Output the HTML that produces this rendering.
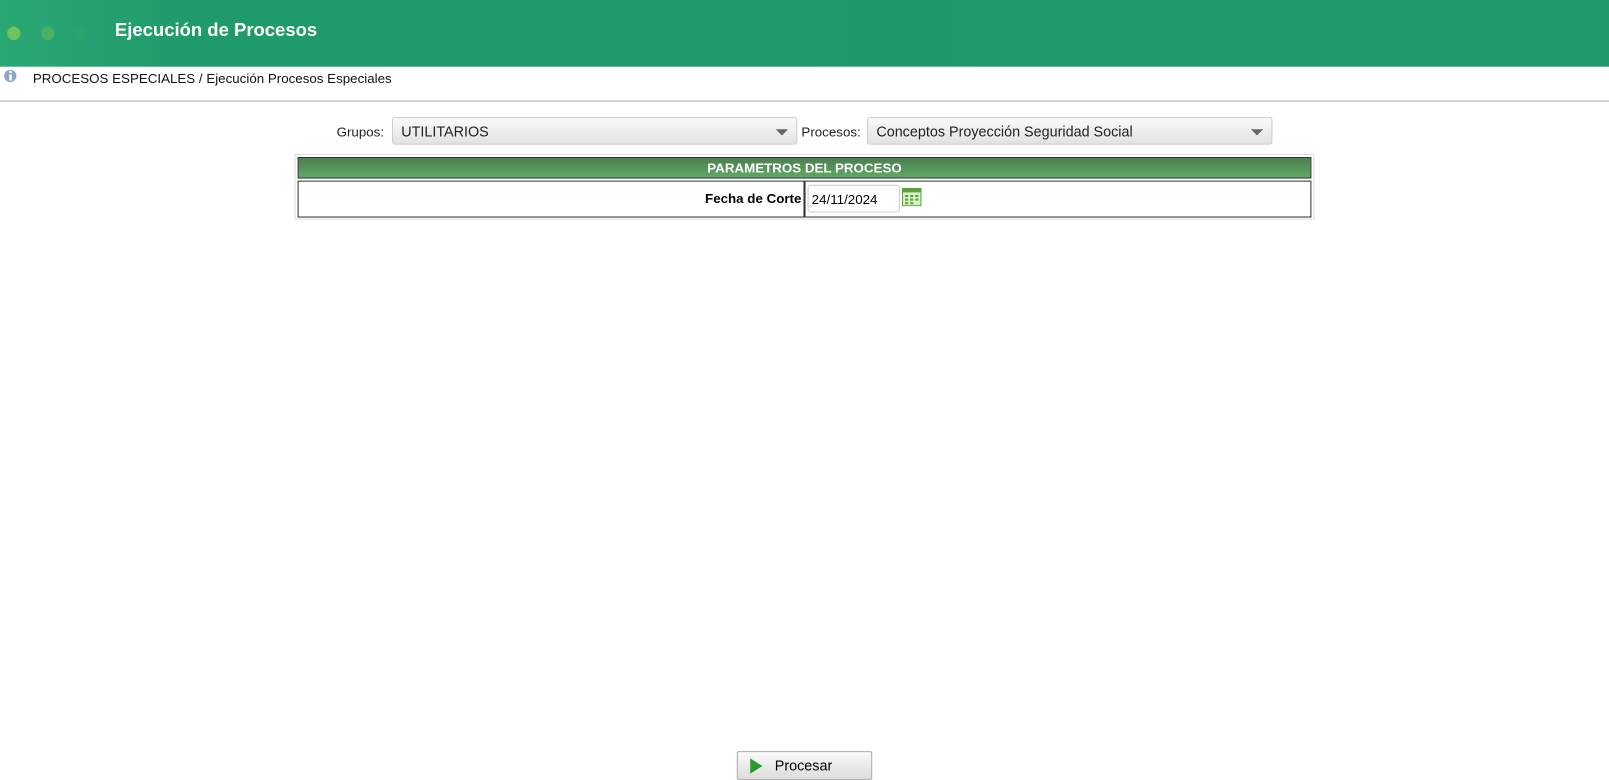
<!DOCTYPE html>
<html><head><meta charset="utf-8"><style>
html,body{margin:0;width:1609px;height:780px;overflow:hidden;background:#fff}
#w{position:absolute;left:0;top:0;width:1568px;height:760px;transform:scale(1.02615);transform-origin:0 0;font-family:"Liberation Sans",sans-serif}
.hdr{position:absolute;left:0;top:0;width:1568px;height:65px;background:linear-gradient(90deg,#2aa874 0%,#1f9a6a 12%,#1e9a6b 100%)}
.dot{position:absolute;top:26px;width:13px;height:13px;border-radius:50%}
.title{position:absolute;left:112px;top:19px;color:#fff;font-weight:bold;font-size:18px}
.bc{position:absolute;left:32px;top:69px;font-size:13px;color:#111}
.line{position:absolute;left:0;top:98px;width:1568px;height:1px;background:#aaa}
.lbl{position:absolute;font-size:13px;color:#222;top:121px}
.sel{position:absolute;top:114px;height:27px;border:1px solid #ccc;border-radius:3px;background:linear-gradient(#fafafa,#e2e2e2);font-size:14px;color:#222;box-sizing:border-box;padding:5px 8px}
.sel:after{content:"";position:absolute;right:8px;top:11px;border:6px solid transparent;border-top:6px solid #666;border-bottom:0}
.tbl{position:absolute;left:287px;top:150px;width:994px;height:64px;border:1px solid #ddd;box-sizing:border-box}
.th{position:absolute;left:290px;top:153px;width:988px;height:21px;background:linear-gradient(#4c7f50,#5fa865);border:1px solid #333;box-sizing:border-box;color:#fff;font-weight:bold;font-size:13px;text-align:center;line-height:19px}
.c1{position:absolute;left:290px;top:176px;width:494px;height:36px;border:1px solid #333;box-sizing:border-box;text-align:right;font-weight:bold;font-size:13px;line-height:34px;padding-right:2px}
.c2{position:absolute;left:784px;top:176px;width:494px;height:36px;border:1px solid #333;box-sizing:border-box}
.inp{position:absolute;left:787px;top:180px;width:90px;height:27px;border:1px solid #ccc;border-radius:3px;box-sizing:border-box;font-size:13px;padding:6px 3px}
.btn{position:absolute;left:718px;top:732px;width:132px;height:28px;border:1px solid #aaa;border-radius:2px;box-sizing:border-box;background:linear-gradient(#fafafa,#ddd);font-size:14px}
</style></head><body><div id="w">
<div class="hdr">
<div class="dot" style="left:7px;background:#6fc25d"></div>
<div class="dot" style="left:40px;background:#4db065"></div>
<div class="dot" style="left:72px;background:#2ba36a"></div>
<div class="title">Ejecución de Procesos</div>
</div>
<svg style="position:absolute;left:3px;top:67px" width="14" height="14"><circle cx="7" cy="7" r="6" fill="#8aa6c8"/><rect x="6" y="2" width="2.5" height="2" fill="#fff"/><rect x="6" y="5.5" width="2.5" height="6" fill="#fff"/></svg>
<div class="bc">PROCESOS ESPECIALES / Ejecución Procesos Especiales</div>
<div class="line"></div>
<div class="lbl" style="left:328px">Grupos:</div>
<div class="sel" style="left:382px;width:395px">UTILITARIOS</div>
<div class="lbl" style="left:781px">Procesos:</div>
<div class="sel" style="left:845px;width:395px">Conceptos Proyección Seguridad Social</div>
<div class="tbl"></div>
<div class="th">PARAMETROS DEL PROCESO</div>
<div class="c1">Fecha de Corte</div>
<div class="c2"></div>
<div class="inp">24/11/2024</div>
<svg style="position:absolute;left:879px;top:183px" width="19" height="18"><rect x="0.5" y="0.5" width="18" height="17" fill="#d9f0c8" stroke="#5aa33a"/><rect x="0.5" y="0.5" width="18" height="4" fill="#5aa33a"/><g fill="#5aa33a"><rect x="3" y="7" width="3" height="2"/><rect x="8" y="7" width="3" height="2"/><rect x="13" y="7" width="3" height="2"/><rect x="3" y="10.5" width="3" height="2"/><rect x="8" y="10.5" width="3" height="2"/><rect x="13" y="10.5" width="3" height="2"/><rect x="3" y="14" width="3" height="2"/><rect x="8" y="14" width="3" height="2"/></g></svg>
<div class="btn"><svg style="position:absolute;left:12px;top:6px" width="12" height="15"><polygon points="0,0 12,7.5 0,15" fill="#2a9a2a"/></svg><span style="position:absolute;left:36px;top:5px">Procesar</span></div>
</div></body></html>
